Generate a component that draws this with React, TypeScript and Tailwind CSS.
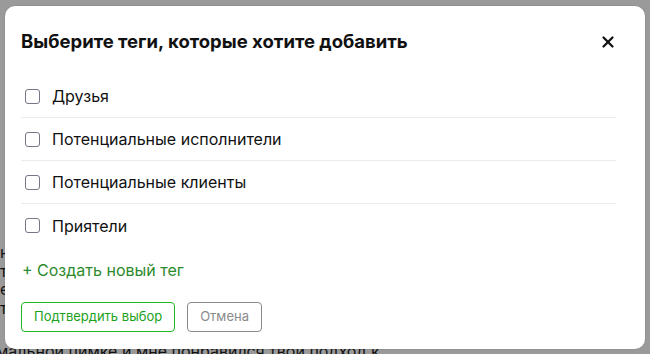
import { X } from "lucide-react";

const tags = ["Друзья", "Потенциальные исполнители", "Потенциальные клиенты", "Приятели"];

export default function App() {
  return (
    <div className="relative h-[354px] w-[650px] overflow-hidden bg-[#9a9a9a] font-['Inter',sans-serif] text-[#111]">
      {/* page text behind the overlay */}
      <div className="pt-[243px] text-[16px] leading-[18.5px] text-[#121212]">
        <p>начало строки текста</p>
        <p>текст продолжается</p>
        <p>еще немного текста</p>
        <p>текст заканчивается</p>
        <p className="mt-[25px] -ml-[4px]">мальной цимке и мне понравился твой подход к</p>
      </div>

      <div className="absolute left-[5px] top-[6px] flex h-[343px] w-[640px] flex-col rounded-[10px] bg-white pl-4 pr-[29px] shadow-[0_0_2px_rgba(0,0,0,0.15)]">
        <div className="flex h-[69px] items-center justify-between pt-[3px]">
          <h2 className="text-[18.5px] font-bold text-[#111]">Выберите теги, которые хотите добавить</h2>
          <button className="-mr-[1px] text-[#111]">
            <X className="h-[18px] w-[18px]" strokeWidth={3} />
          </button>
        </div>

        <div className="flex flex-col">
          {tags.map((t, i) => (
            <label
              key={t}
              className={`flex h-[43px] items-center gap-3 pl-1 ${i < tags.length - 1 ? "border-b border-[#ebebeb]" : ""}`}
            >
              <span className="h-[15px] w-[15px] rounded-[3px] border border-[#767686] bg-white" />
              <span className="text-[16px] text-[#111]">{t}</span>
            </label>
          ))}
        </div>

        <button className="mt-[11px] self-start pl-[1px] text-[16px] text-[#2c8a2c]">+ Создать новый тег</button>

        <div className="mt-[20px] flex gap-3">
          <button className="h-[30px] rounded-[4px] border border-[#1fb71f] px-[12px] text-[13px] text-[#1ba11b]">Подтвердить выбор</button>
          <button className="h-[30px] rounded-[4px] border border-[#8a8a8a] px-[12px] text-[13px] text-[#8a8a8a]">Отмена</button>
        </div>
      </div>
    </div>
  );
}
